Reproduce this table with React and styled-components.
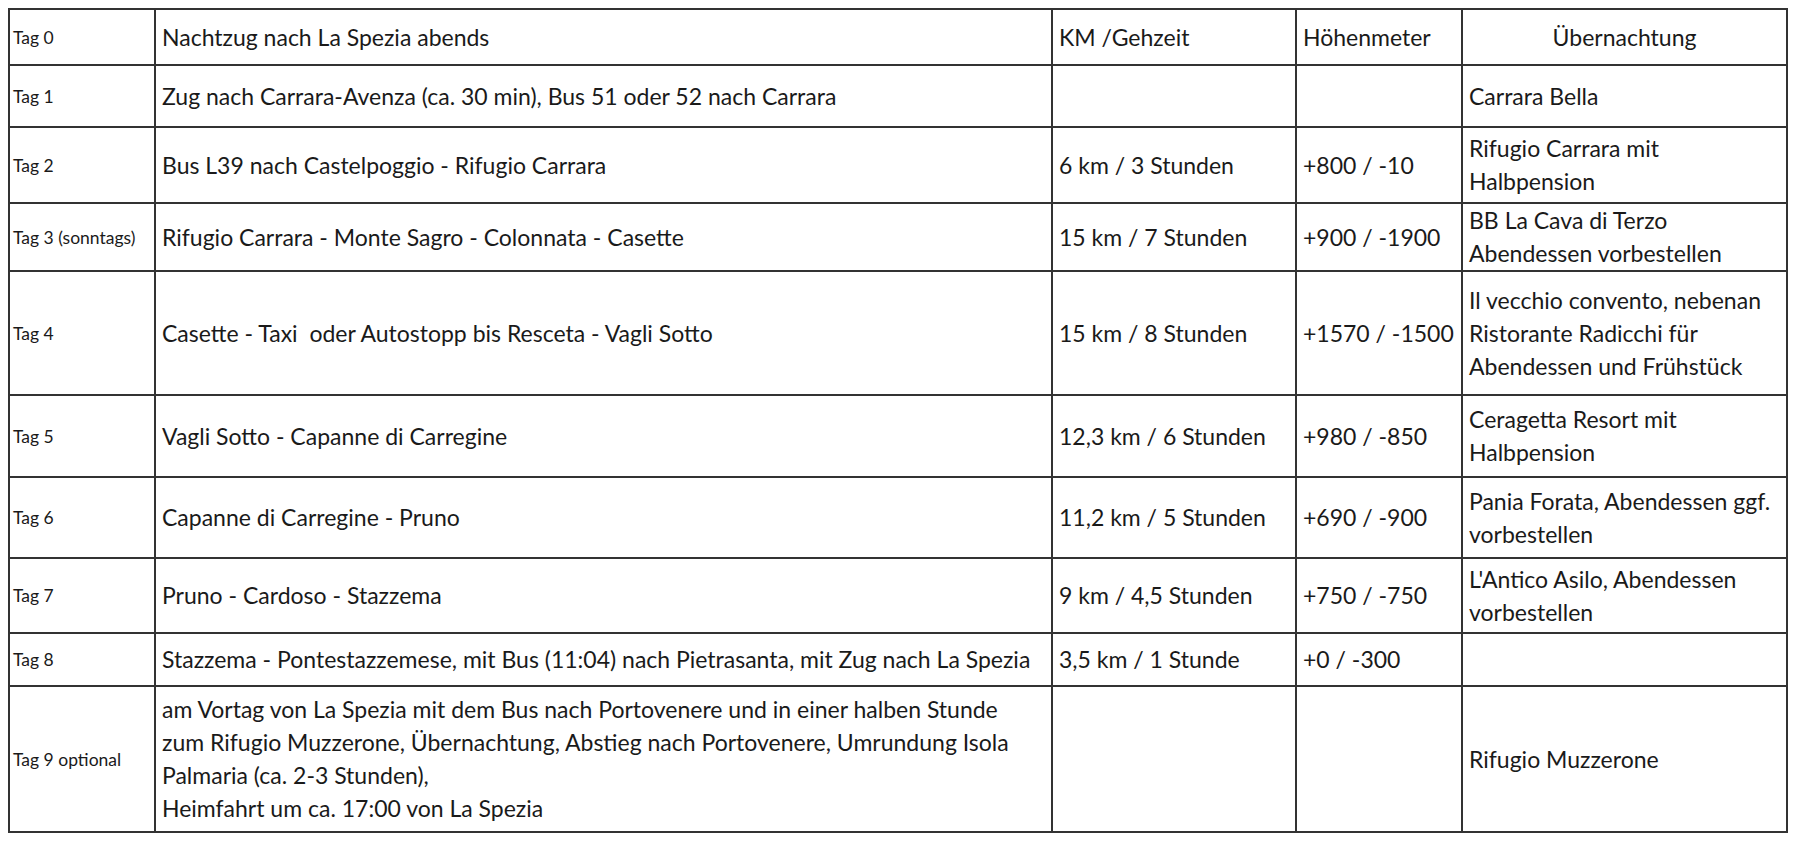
import React from 'react';
import styled, { createGlobalStyle } from 'styled-components';

const Global = createGlobalStyle`
  html, body { margin: 0; padding: 0; background: #ffffff; }
  body { font-family: Lato, "Open Sans", sans-serif; color: #1a1a1a; }
`;

const Page = styled.div`
  padding: 8px 0 0 8px;
`;

const Table = styled.table`
  border-collapse: collapse;
  table-layout: fixed;
  width: 1780px;
  border: 2px solid #2f2f2f;
`;

const Row = styled.tr`
  height: ${(p) => p.$h}px;
`;

const Cell = styled.td`
  border: 2px solid #333333;
  padding: 0 ${(p) => (p.$tag ? 3 : 6)}px;
  vertical-align: middle;
  text-align: ${(p) => (p.$center ? 'center' : 'left')};
  font-size: ${(p) => (p.$tag ? '17.5px' : '23px')};
  line-height: 33px;
  white-space: pre;
  overflow: hidden;
`;

const Line = styled.div`
  white-space: pre;
`;

const cols = [146, 897, 244, 166, 325];

const rows = [
  { h: 56, tag: 'Tag 0', route: ['Nachtzug nach La Spezia abends'], km: 'KM /Gehzeit', hm: 'Höhenmeter', stay: ['Übernachtung'], head: true },
  { h: 62, tag: 'Tag 1', route: ['Zug nach Carrara-Avenza (ca. 30 min), Bus 51 oder 52 nach Carrara'], km: '', hm: '', stay: ['Carrara Bella'] },
  { h: 76, tag: 'Tag 2', route: ['Bus L39 nach Castelpoggio - Rifugio Carrara'], km: '6 km / 3 Stunden', hm: '+800 / -10', stay: ['Rifugio Carrara mit', 'Halbpension'] },
  { h: 67, tag: 'Tag 3 (sonntags)', route: ['Rifugio Carrara - Monte Sagro - Colonnata - Casette'], km: '15 km / 7 Stunden', hm: '+900 / -1900', stay: ['BB La Cava di Terzo', 'Abendessen vorbestellen'] },
  { h: 124, tag: 'Tag 4', route: ['Casette - Taxi  oder Autostopp bis Resceta - Vagli Sotto'], km: '15 km / 8 Stunden', hm: '+1570 / -1500', stay: ['Il vecchio convento, nebenan', 'Ristorante Radicchi für', 'Abendessen und Frühstück'] },
  { h: 82, tag: 'Tag 5', route: ['Vagli Sotto - Capanne di Carregine'], km: '12,3 km / 6 Stunden', hm: '+980 / -850', stay: ['Ceragetta Resort mit', 'Halbpension'] },
  { h: 81, tag: 'Tag 6', route: ['Capanne di Carregine - Pruno'], km: '11,2 km / 5 Stunden', hm: '+690 / -900', stay: ['Pania Forata, Abendessen ggf.', 'vorbestellen'] },
  { h: 75, tag: 'Tag 7', route: ['Pruno - Cardoso - Stazzema'], km: '9 km / 4,5 Stunden', hm: '+750 / -750', stay: ["L'Antico Asilo, Abendessen", 'vorbestellen'] },
  { h: 53, tag: 'Tag 8', route: ['Stazzema - Pontestazzemese, mit Bus (11:04) nach Pietrasanta, mit Zug nach La Spezia'], km: '3,5 km / 1 Stunde', hm: '+0 / -300', stay: [] },
  { h: 146, tag: 'Tag 9 optional', route: ['am Vortag von La Spezia mit dem Bus nach Portovenere und in einer halben Stunde', 'zum Rifugio Muzzerone, Übernachtung, Abstieg nach Portovenere, Umrundung Isola', 'Palmaria (ca. 2-3 Stunden),', 'Heimfahrt um ca. 17:00 von La Spezia'], km: '', hm: '', stay: ['Rifugio Muzzerone'] },
];

export default function App() {
  return (
    <>
      <Global />
      <Page>
        <Table>
          <colgroup>
            {cols.map((w, i) => (
              <col key={i} style={{ width: w }} />
            ))}
          </colgroup>
          <tbody>
            {rows.map((r) => (
              <Row key={r.tag} $h={r.h}>
                <Cell $tag>{r.tag}</Cell>
                <Cell>
                  {r.route.map((l, i) => (
                    <Line key={i}>{l}</Line>
                  ))}
                </Cell>
                <Cell>{r.km}</Cell>
                <Cell>{r.hm}</Cell>
                <Cell $center={r.head}>
                  {r.stay.map((l, i) => (
                    <Line key={i}>{l}</Line>
                  ))}
                </Cell>
              </Row>
            ))}
          </tbody>
        </Table>
      </Page>
    </>
  );
}
